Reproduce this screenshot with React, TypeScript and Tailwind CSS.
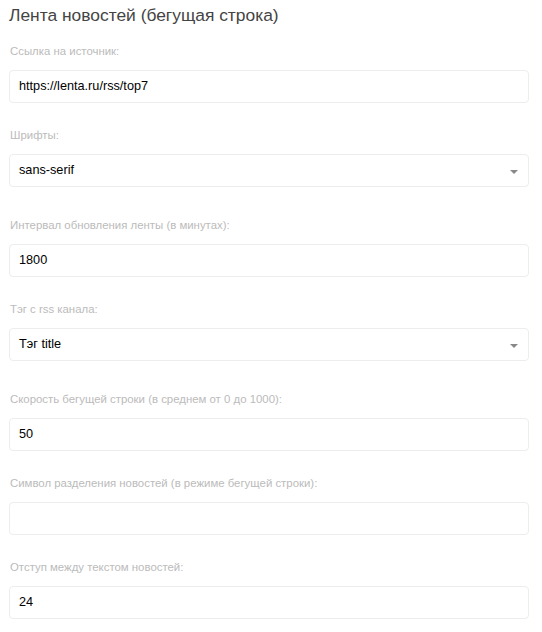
const fields: { label: string; value: string; select?: boolean }[] = [
  { label: 'Ссылка на источник:', value: 'https://lenta.ru/rss/top7' },
  { label: 'Шрифты:', value: 'sans-serif', select: true },
  { label: 'Интервал обновления ленты (в минутах):', value: '1800' },
  { label: 'Тэг с rss канала:', value: 'Тэг title', select: true },
  { label: 'Скорость бегущей строки (в среднем от 0 до 1000):', value: '50' },
  { label: 'Символ разделения новостей (в режиме бегущей строки):', value: '' },
  { label: 'Отступ между текстом новостей:', value: '24' },
];

function Field({ label, value, select }: { label: string; value: string; select?: boolean }) {
  return (
    <div className={select ? 'mb-[30px]' : 'mb-[24px]'}>
      <label className="block text-[11.4px] leading-4 text-[#bbbbbb] pl-px mb-[11px]">{label}</label>
      <div className="relative h-[33px] rounded-[4px] border border-[#ededed] bg-white flex items-center px-[9px] text-[12.7px] text-black">
        <span>{value}</span>
        {select && (
          <span className="absolute right-[10px] top-[15px] w-0 h-0 border-l-[4px] border-r-[4px] border-t-[4px] border-l-transparent border-r-transparent border-t-[#888888]" />
        )}
      </div>
    </div>
  );
}

export default function App() {
  return (
    <div className="w-[542px] bg-white pl-[9px] pr-[13px] font-['Liberation_Sans',Arial,sans-serif]">
      <h1 className="pt-[3px] text-[17.4px] leading-6 text-[#444444] font-normal">Лента новостей (бегущая строка)</h1>
      <div className="mt-[16px]">
        {fields.map((f) => (
          <Field key={f.label} {...f} />
        ))}
      </div>
    </div>
  );
}
